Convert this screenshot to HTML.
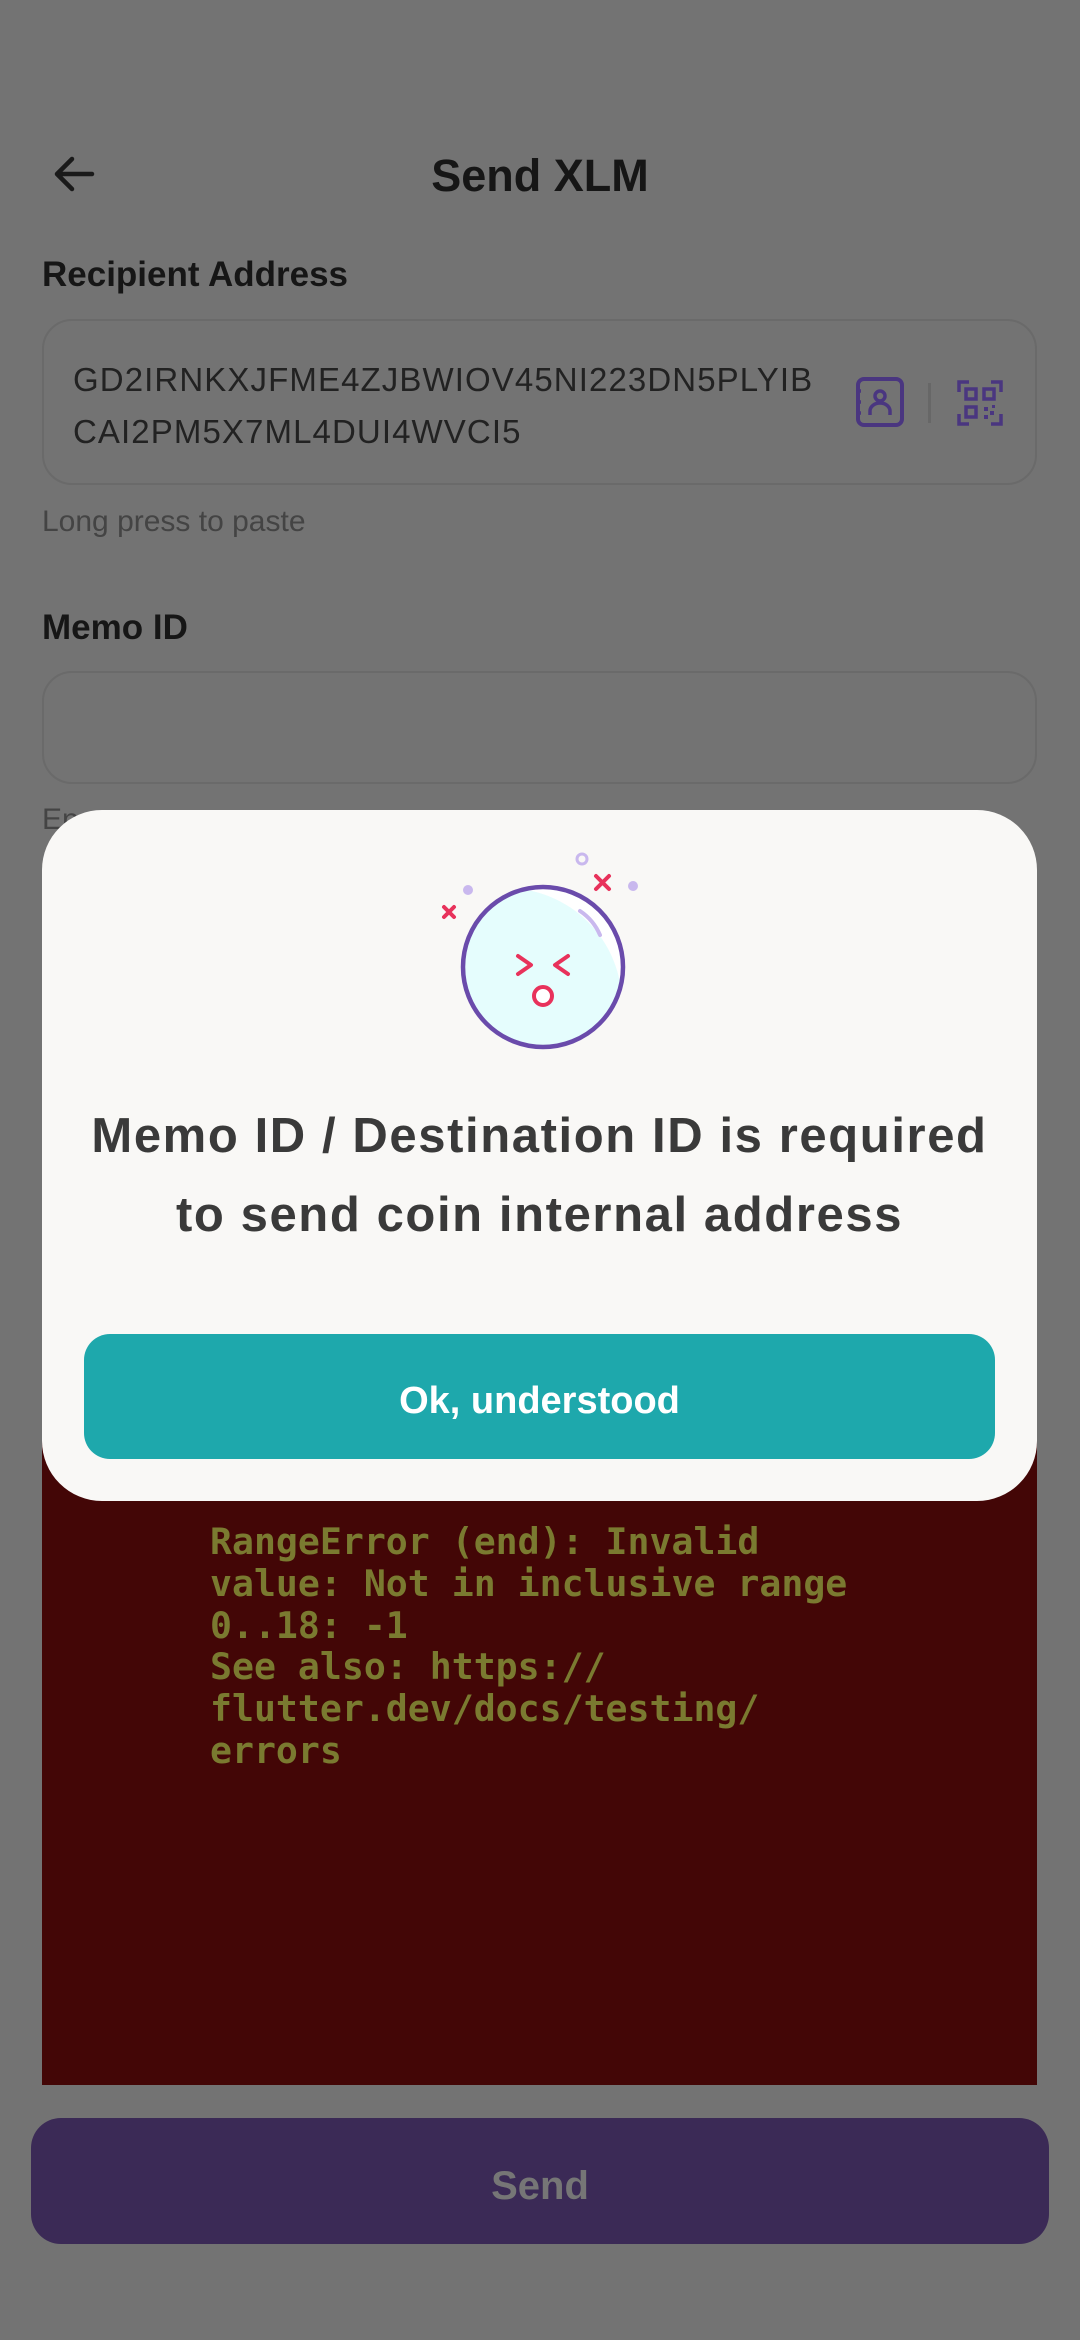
<!DOCTYPE html>
<html><head><meta charset="utf-8"><style>
*{margin:0;padding:0;box-sizing:border-box}
body{width:1080px;height:2340px;position:relative;overflow:hidden;background:#737373;font-family:"Liberation Sans",sans-serif}
.a{position:absolute}
.lbl{color:#161616;font-size:35px;font-weight:bold;left:42px}
.box{left:42px;width:995px;border:2px solid #6a6a6a;border-radius:30px}
</style></head><body>
<svg class="a" style="left:50px;top:150px" width="48" height="48" viewBox="0 0 48 48"><path d="M42 24H8M22 9L7 24l15 15" fill="none" stroke="#1a1a1a" stroke-width="4.5" stroke-linecap="round" stroke-linejoin="round"/></svg>
<div class="a" style="left:0;width:1080px;top:150px;text-align:center;font-size:45px;font-weight:bold;color:#161616">Send XLM</div>
<div class="a lbl" style="top:255px">Recipient Address</div>
<div class="a box" style="top:319px;height:166px"></div>
<div class="a" style="left:73px;top:354px;font-size:33px;line-height:52px;color:#222;letter-spacing:1.1px">GD2IRNKXJFME4ZJBWIOV45NI223DN5PLYIB<br>CAI2PM5X7ML4DUI4WVCI5</div>
<svg class="a" style="left:854px;top:377px" width="52" height="52" viewBox="0 0 52 52"><rect x="4" y="2" width="44" height="46" rx="6" fill="none" stroke="#4a3680" stroke-width="4"/><circle cx="26" cy="19" r="5" fill="none" stroke="#4a3680" stroke-width="3.5"/><path d="M16 38v-4a10 8 0 0 1 20 0v4" fill="none" stroke="#4a3680" stroke-width="3.5"/><path d="M2 14h5M2 25h5M2 36h5" stroke="#4a3680" stroke-width="3.5"/></svg>
<div class="a" style="left:928px;top:383px;width:3px;height:40px;background:#676767"></div>
<svg class="a" style="left:957px;top:380px" width="46" height="46" viewBox="0 0 46 46"><g fill="none" stroke="#4a3680" stroke-width="3.5"><path d="M2 12V2h10M34 2h10v10M44 34v10H34M12 44H2V34"/><rect x="9" y="9" width="10" height="10"/><rect x="27" y="9" width="10" height="10"/><rect x="9" y="27" width="10" height="10"/></g><path d="M27 27h4v4h-4zM33 31h4v4h-4zM27 35h4v4h-4zM35 25h3v3h-3z" fill="#4a3680"/></svg>
<div class="a" style="left:42px;top:505px;font-size:30px;color:#444">Long press to paste</div>
<div class="a lbl" style="top:608px">Memo ID</div>
<div class="a box" style="top:671px;height:113px"></div>
<div class="a" style="left:42px;top:803px;font-size:30px;color:#444">En</div>
<div class="a" style="left:42px;top:1380px;width:995px;height:705px;background:#430606"></div>
<div class="a" style="left:210px;top:1521px;font-family:'DejaVu Sans Mono','Liberation Mono',monospace;font-weight:bold;font-size:36.5px;line-height:41.8px;color:#7a7a30;white-space:pre">RangeError (end): Invalid
value: Not in inclusive range
0..18: -1
See also: https://
flutter.dev/docs/testing/
errors</div>
<div class="a" style="left:42px;top:810px;width:995px;height:691px;background:#f9f8f6;border-radius:60px"></div>
<svg class="a" style="left:0;top:0" width="1080" height="1100" viewBox="0 0 1080 1100">
<defs><clipPath id="c"><circle cx="543" cy="967" r="80"/></clipPath></defs>
<circle cx="543" cy="967" r="80" fill="#fff"/>
<circle cx="506" cy="1004" r="116" fill="#e5fdfd" clip-path="url(#c)"/>
<circle cx="543" cy="967" r="80" fill="none" stroke="#6a4bab" stroke-width="4.5"/>
<path d="M580 911a55 55 0 0 1 20 24" fill="none" stroke="#c9b8ee" stroke-width="4" stroke-linecap="round"/>
<g fill="none" stroke="#e8325b" stroke-width="4" stroke-linecap="round" stroke-linejoin="round">
<path d="M518 956l13 9-13 9M568 956l-13 9 13 9"/>
<path d="M444 907l10 10M454 907l-10 10M596 876l13 13M609 876l-13 13"/>
</g>
<circle cx="543" cy="996" r="9" fill="#fff" stroke="#e8325b" stroke-width="4"/>
<circle cx="468" cy="890" r="5" fill="#c9b8ee"/>
<circle cx="633" cy="886" r="5" fill="#c9b8ee"/>
<circle cx="582" cy="859" r="5" fill="none" stroke="#c9b8ee" stroke-width="3"/>
</svg>
<div class="a" style="left:42px;width:995px;top:1097px;text-align:center;font-size:49px;line-height:79px;font-weight:bold;color:#3a3a3a;letter-spacing:1.6px">Memo ID / Destination ID is required<br>to send coin internal address</div>
<div class="a" style="left:84px;top:1334px;width:911px;height:125px;background:#1ea8ac;border-radius:26px;color:#fff;font-size:38px;font-weight:bold;text-align:center;line-height:135px">Ok, understood</div>
<div class="a" style="left:31px;top:2118px;width:1018px;height:126px;background:#3b2a56;border-radius:30px;color:#767676;font-size:40px;font-weight:bold;text-align:center;line-height:136px">Send</div>
</body></html>
